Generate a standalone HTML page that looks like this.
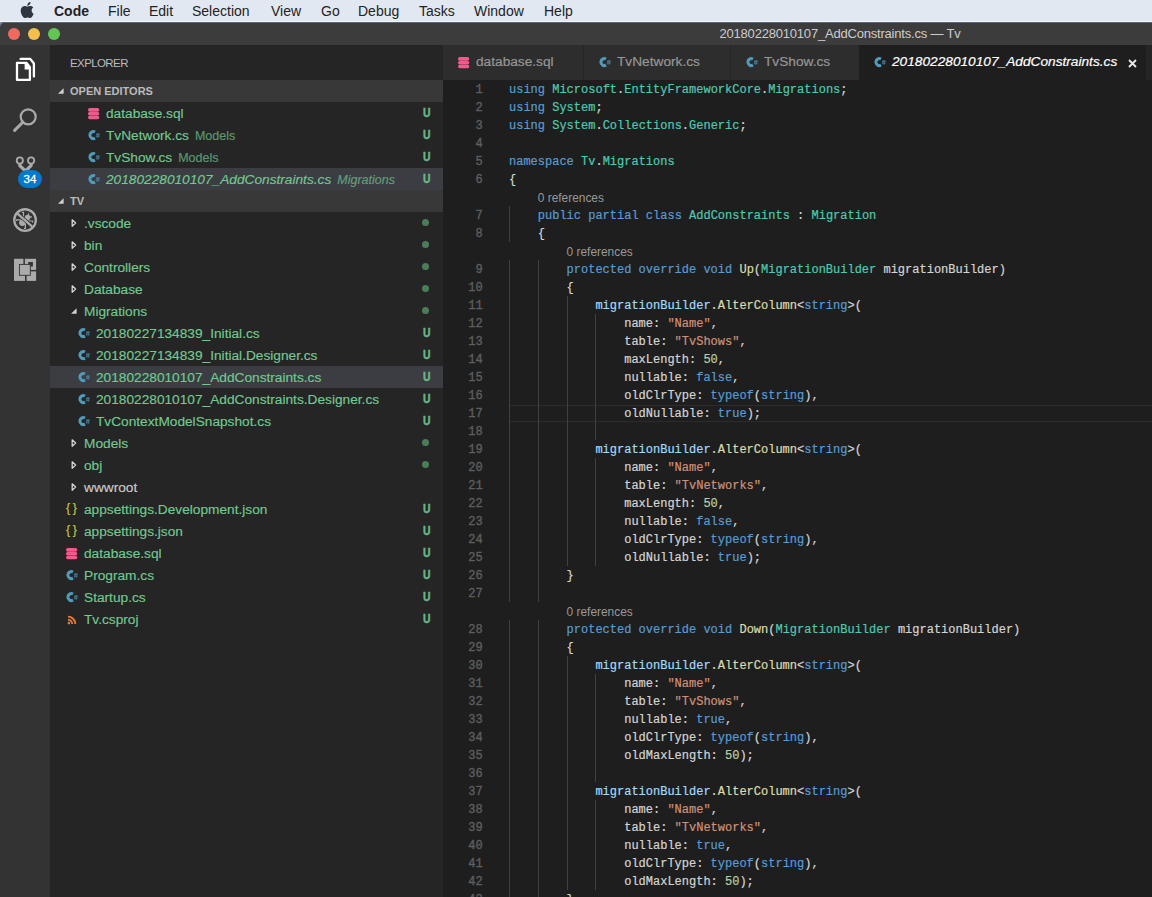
<!DOCTYPE html>
<html><head><meta charset="utf-8">
<style>
*{margin:0;padding:0;box-sizing:border-box}
html,body{width:1152px;height:897px;overflow:hidden;background:#1e1e1e;font-family:"Liberation Sans",sans-serif}
.a{position:absolute;white-space:nowrap}
#menubar{position:absolute;left:0;top:0;width:1152px;height:22px;background:#e2e8f1;color:#222;font-size:14px}
#menubar span{position:absolute;top:3px}
#titlebar{position:absolute;left:0;top:22px;width:1152px;height:23px;background:#3c3c3c;border-radius:5px 0 0 0;box-shadow:inset 0 1px 0 #55657a}
#titlebar .t{position:absolute;left:719.5px;top:4px;color:#cccccc;font-size:13px;letter-spacing:-0.2px}
.dot{position:absolute;top:28px;width:12px;height:12px;border-radius:50%}
#act{position:absolute;left:0;top:45px;width:50px;height:852px;background:#333333}
#side{position:absolute;left:50px;top:45px;width:393px;height:852px;background:#252526;color:#73c991;font-size:13px}
#tabs{position:absolute;left:443px;top:45px;width:709px;height:35px;background:#252526}
.tab{position:absolute;top:0;height:35px;background:#2d2d2d;color:#969696;font-size:13.7px}
.tab .tx{position:absolute;top:9px;-webkit-text-stroke:0.2px currentColor}
#editor{position:absolute;left:443px;top:80px;width:709px;height:817px;background:#1e1e1e;overflow:hidden}
.ln{position:absolute;left:0;margin-top:1px;width:39.7px;text-align:right;color:#5e5e5e;-webkit-text-stroke:0.35px #5e5e5e;font-family:"Liberation Mono",monospace;font-size:12px;line-height:18px;height:18px}
.cl{position:absolute;margin-top:1px;-webkit-text-stroke:0.2px;color:#d4d4d4;font-family:"Liberation Mono",monospace;font-size:12px;line-height:18px;height:18px;white-space:pre}
.lens{position:absolute;color:#999999;font-size:11.9px;line-height:18px;height:18px;margin-top:1px;white-space:pre}
.row{position:absolute;left:0;width:393px;height:22px}
.row .tx{position:absolute;top:4px}
.row .u{position:absolute;left:372px;top:4px;font-size:12px}
.row .d{position:absolute;left:373px;top:8px;width:7px;height:7px;border-radius:50%;background:#4f7a5e}
.g{position:absolute;width:1px;height:18px;background:#404040}
.hdr{position:absolute;left:0;width:393px;height:22px;background:#383838;color:#bbbbbb;font-size:11px;font-weight:bold}
</style></head><body>
<div id="menubar">
  <svg class="a" style="left:20px;top:2px" width="14" height="16" viewBox="0 0 14 16"><path d="M11.6 8.5c0-2 1.6-2.9 1.7-3-0.9-1.4-2.4-1.5-2.9-1.6-1.2-0.1-2.4 0.7-3 0.7s-1.6-0.7-2.6-0.7C3.4 4 2.1 4.7 1.4 6c-1.4 2.5-0.4 6.1 1 8.1 0.7 1 1.5 2 2.5 2 1 0 1.4-0.7 2.6-0.7s1.6 0.7 2.6 0.6c1.1 0 1.8-1 2.4-2 0.8-1.1 1.1-2.2 1.1-2.3-0.1 0-2-0.8-2-3.2zM9.7 2.6c0.5-0.7 0.9-1.6 0.8-2.6-0.8 0-1.8 0.5-2.4 1.200-0.5 0.6-1 1.5-0.8 2.500 0.9 0.1 1.8-0.400 2.400-1.100z" fill="#303641"/></svg>
  <span style="left:54px;font-weight:bold">Code</span>
  <span style="left:108px">File</span>
  <span style="left:149px">Edit</span>
  <span style="left:192px">Selection</span>
  <span style="left:271px">View</span>
  <span style="left:321px">Go</span>
  <span style="left:358px">Debug</span>
  <span style="left:419px">Tasks</span>
  <span style="left:474px">Window</span>
  <span style="left:544px">Help</span>
</div>
<div style="position:absolute;left:0;top:21px;width:1152px;height:10px;background:#7e92aa"></div>
<div style="position:absolute;left:0;top:21px;width:1152px;height:1px;background:#f3f6fa"></div>
<div id="titlebar"><div class="t">20180228010107_AddConstraints.cs — Tv</div></div>
<div class="dot" style="left:8px;background:#ee6a5e"></div>
<div class="dot" style="left:28px;background:#f5bf4f"></div>
<div class="dot" style="left:48px;background:#62c655"></div>

<div id="act">

<svg class="a" style="left:14px;top:11px" width="24" height="28" viewBox="0 0 24 28"><g fill="none" stroke="#ffffff" stroke-width="2.3" stroke-linejoin="round" stroke-linecap="round"><path d="M3 6.85H12.6L15.9 11.2V23.95H3Z"/><path d="M6.6 2.9H16.3L19.9 7.5V20.6"/></g><path d="M10.6 6.85H12.6L15.9 11.2V13.4H10.6Z" fill="#ffffff"/></svg>
<svg class="a" style="left:12px;top:62px" width="26" height="26" viewBox="0 0 26 26"><g fill="none" stroke="#a9a9a9" stroke-width="2.2"><circle cx="16.2" cy="9.8" r="7.5"/><path d="M10.8 15.2L2.6 23.4" stroke-width="3" stroke-linecap="round"/></g></svg>
<svg class="a" style="left:10px;top:105px" width="30" height="30" viewBox="0 0 30 30"><g fill="none" stroke="#ababab"><circle cx="9.8" cy="10.5" r="3.1" stroke-width="1.8"/><circle cx="21.1" cy="10.5" r="3.1" stroke-width="1.8"/><path d="M9.8 13.4V15.6L15.45 21M21.1 13.4V15.6L15.45 21" stroke-width="3.2" stroke-linejoin="round"/></g></svg>
<div class="a" style="left:18px;top:125px;width:24px;height:18px;border-radius:9px;background:#007acc;color:#fff;font-size:11.5px;-webkit-text-stroke:0.3px #fff;text-align:center;line-height:18px">34</div>
<svg class="a" style="left:11px;top:161px" width="28" height="28" viewBox="0 0 28 28"><g fill="#ababab"><ellipse cx="11.4" cy="16.8" rx="3.3" ry="3.1"/><ellipse cx="16.6" cy="11.4" rx="2.8" ry="2.6"/></g><g fill="none" stroke="#ababab" stroke-width="1.2"><path d="M5.6 15V13.8H10.5M12.5 10.5V6.4H11M17.5 10V7.2M18.4 10.8H21M17 15H21.6V16.6M14.4 17.5V22.4H13"/></g><path d="M6.2 7.4L21.2 20.6" stroke="#333333" stroke-width="3.6"/><path d="M6.2 7.4L21.2 20.6" stroke="#ababab" stroke-width="2.2"/><circle cx="14.05" cy="14.05" r="10.8" fill="none" stroke="#ababab" stroke-width="2.3"/></svg>
<svg class="a" style="left:13px;top:213px" width="24" height="24" viewBox="0 0 24 24"><path d="M1 0.8h22.1v22.1H1z" fill="#ababab"/><g fill="#333333"><rect x="10.4" y="0" width="1.5" height="7"/><rect x="12" y="17" width="1.6" height="7"/><rect x="17" y="11.9" width="7" height="1.5"/><rect x="15.2" y="4" width="4.7" height="4.5"/></g><rect x="6.4" y="6.4" width="10.9" height="10.9" fill="#ababab" stroke="#333333" stroke-width="0.9"/></svg>

</div>

<div id="side">
<div class="a" style="left:20px;top:12px;color:#bbbbbb;font-size:11.5px;letter-spacing:-0.6px">EXPLORER</div>
<div class="hdr" style="top:35px"></div>
<svg class="a" style="left:7px;top:42px" width="8" height="8" viewBox="0 0 8 8"><path d="M6.6 1.2L6.6 6.8L1 6.8Z" fill="#d0d0d0"/></svg>
<div class="a" style="left:20px;top:40px;color:#bbbbbb;font-size:11px;font-weight:bold">OPEN EDITORS</div>
<svg class="a" style="left:38px;top:63px" width="12" height="12" viewBox="0 0 12 12"><g fill="#f05b8b"><rect x="0" y="0" width="11.3" height="3.7" rx="1.85"/><rect x="0" y="3.95" width="11.3" height="3.5" rx="1.6"/><rect x="0" y="7.7" width="11.3" height="3.6" rx="1.7"/></g></svg><div class="a" style="left:56px;top:58px;line-height:22px;font-size:13.7px;-webkit-text-stroke:0.15px #73c991;color:#73c991;">database.sql</div><div class="a" style="left:372.8px;top:57px;line-height:22px;color:#68b985;font-size:13px;font-weight:bold;-webkit-text-stroke:0.5px #68b985;transform:scaleX(0.8);transform-origin:0 0">U</div>
<svg class="a" style="left:38px;top:85px" width="12" height="11" viewBox="0 0 12 11"><path d="M7.0 2.0A3.5 3.5 0 1 0 7.0 8.2" fill="none" stroke="#519aba" stroke-width="3"/><g stroke="#519aba" stroke-width="0.75" opacity="0.85"><path d="M9.2 3.0l-0.3 4.6M10.9 3.0l-0.3 4.6M8.0 4.4h3.6M7.8 6.2h3.6"/></g></svg><div class="a" style="left:56px;top:80px;line-height:22px;font-size:13.7px;-webkit-text-stroke:0.15px #73c991;color:#73c991;">TvNetwork.cs<span style="font-size:12.5px;opacity:0.7;margin-left:6px">Models</span></div><div class="a" style="left:372.8px;top:79px;line-height:22px;color:#68b985;font-size:13px;font-weight:bold;-webkit-text-stroke:0.5px #68b985;transform:scaleX(0.8);transform-origin:0 0">U</div>
<svg class="a" style="left:38px;top:107px" width="12" height="11" viewBox="0 0 12 11"><path d="M7.0 2.0A3.5 3.5 0 1 0 7.0 8.2" fill="none" stroke="#519aba" stroke-width="3"/><g stroke="#519aba" stroke-width="0.75" opacity="0.85"><path d="M9.2 3.0l-0.3 4.6M10.9 3.0l-0.3 4.6M8.0 4.4h3.6M7.8 6.2h3.6"/></g></svg><div class="a" style="left:56px;top:102px;line-height:22px;font-size:13.7px;-webkit-text-stroke:0.15px #73c991;color:#73c991;">TvShow.cs<span style="font-size:12.5px;opacity:0.7;margin-left:6px">Models</span></div><div class="a" style="left:372.8px;top:101px;line-height:22px;color:#68b985;font-size:13px;font-weight:bold;-webkit-text-stroke:0.5px #68b985;transform:scaleX(0.8);transform-origin:0 0">U</div>
<div class="row" style="top:123px;background:#3c3c43"></div><svg class="a" style="left:38px;top:129px" width="12" height="11" viewBox="0 0 12 11"><path d="M7.0 2.0A3.5 3.5 0 1 0 7.0 8.2" fill="none" stroke="#519aba" stroke-width="3"/><g stroke="#519aba" stroke-width="0.75" opacity="0.85"><path d="M9.2 3.0l-0.3 4.6M10.9 3.0l-0.3 4.6M8.0 4.4h3.6M7.8 6.2h3.6"/></g></svg><div class="a" style="left:56px;top:124px;line-height:22px;font-size:13.7px;-webkit-text-stroke:0.15px #73c991;color:#73c991;font-style:italic;">20180228010107_AddConstraints.cs<span style="font-size:12.5px;opacity:0.7;margin-left:6px"><i>Migrations</i></span></div><div class="a" style="left:372.8px;top:123px;line-height:22px;color:#68b985;font-size:13px;font-weight:bold;-webkit-text-stroke:0.5px #68b985;transform:scaleX(0.8);transform-origin:0 0">U</div>
<div class="hdr" style="top:145px"></div>
<svg class="a" style="left:7px;top:152px" width="8" height="8" viewBox="0 0 8 8"><path d="M6.6 1.2L6.6 6.8L1 6.8Z" fill="#d0d0d0"/></svg>
<div class="a" style="left:20px;top:150px;color:#bbbbbb;font-size:11px;font-weight:bold">TV</div>
<svg class="a" style="left:21px;top:173px" width="6" height="10" viewBox="0 0 6 10"><path d="M1.2 1.8L4.6 5L1.2 8.2Z" fill="none" stroke="#d4d4d4" stroke-width="1.3" stroke-linejoin="round"/></svg><div class="a" style="left:34px;top:168px;line-height:22px;font-size:13.7px;-webkit-text-stroke:0.15px #73c991;color:#73c991;">.vscode</div><div class="a" style="left:372px;top:174px;width:7px;height:7px;border-radius:50%;background:#4b7d5b"></div>
<svg class="a" style="left:21px;top:195px" width="6" height="10" viewBox="0 0 6 10"><path d="M1.2 1.8L4.6 5L1.2 8.2Z" fill="none" stroke="#d4d4d4" stroke-width="1.3" stroke-linejoin="round"/></svg><div class="a" style="left:34px;top:190px;line-height:22px;font-size:13.7px;-webkit-text-stroke:0.15px #73c991;color:#73c991;">bin</div><div class="a" style="left:372px;top:196px;width:7px;height:7px;border-radius:50%;background:#4b7d5b"></div>
<svg class="a" style="left:21px;top:217px" width="6" height="10" viewBox="0 0 6 10"><path d="M1.2 1.8L4.6 5L1.2 8.2Z" fill="none" stroke="#d4d4d4" stroke-width="1.3" stroke-linejoin="round"/></svg><div class="a" style="left:34px;top:212px;line-height:22px;font-size:13.7px;-webkit-text-stroke:0.15px #73c991;color:#73c991;">Controllers</div><div class="a" style="left:372px;top:218px;width:7px;height:7px;border-radius:50%;background:#4b7d5b"></div>
<svg class="a" style="left:21px;top:239px" width="6" height="10" viewBox="0 0 6 10"><path d="M1.2 1.8L4.6 5L1.2 8.2Z" fill="none" stroke="#d4d4d4" stroke-width="1.3" stroke-linejoin="round"/></svg><div class="a" style="left:34px;top:234px;line-height:22px;font-size:13.7px;-webkit-text-stroke:0.15px #73c991;color:#73c991;">Database</div><div class="a" style="left:372px;top:240px;width:7px;height:7px;border-radius:50%;background:#4b7d5b"></div>
<svg class="a" style="left:20px;top:262px" width="8" height="8" viewBox="0 0 8 8"><path d="M6.6 1.2L6.6 6.8L1 6.8Z" fill="#d0d0d0"/></svg><div class="a" style="left:34px;top:256px;line-height:22px;font-size:13.7px;-webkit-text-stroke:0.15px #73c991;color:#73c991;">Migrations</div><div class="a" style="left:372px;top:262px;width:7px;height:7px;border-radius:50%;background:#4b7d5b"></div>
<svg class="a" style="left:28px;top:283px" width="12" height="11" viewBox="0 0 12 11"><path d="M7.0 2.0A3.5 3.5 0 1 0 7.0 8.2" fill="none" stroke="#519aba" stroke-width="3"/><g stroke="#519aba" stroke-width="0.75" opacity="0.85"><path d="M9.2 3.0l-0.3 4.6M10.9 3.0l-0.3 4.6M8.0 4.4h3.6M7.8 6.2h3.6"/></g></svg><div class="a" style="left:46px;top:278px;line-height:22px;font-size:13.7px;-webkit-text-stroke:0.15px #73c991;color:#73c991;">20180227134839_Initial.cs</div><div class="a" style="left:372.8px;top:277px;line-height:22px;color:#68b985;font-size:13px;font-weight:bold;-webkit-text-stroke:0.5px #68b985;transform:scaleX(0.8);transform-origin:0 0">U</div>
<svg class="a" style="left:28px;top:305px" width="12" height="11" viewBox="0 0 12 11"><path d="M7.0 2.0A3.5 3.5 0 1 0 7.0 8.2" fill="none" stroke="#519aba" stroke-width="3"/><g stroke="#519aba" stroke-width="0.75" opacity="0.85"><path d="M9.2 3.0l-0.3 4.6M10.9 3.0l-0.3 4.6M8.0 4.4h3.6M7.8 6.2h3.6"/></g></svg><div class="a" style="left:46px;top:300px;line-height:22px;font-size:13.7px;-webkit-text-stroke:0.15px #73c991;color:#73c991;">20180227134839_Initial.Designer.cs</div><div class="a" style="left:372.8px;top:299px;line-height:22px;color:#68b985;font-size:13px;font-weight:bold;-webkit-text-stroke:0.5px #68b985;transform:scaleX(0.8);transform-origin:0 0">U</div>
<div class="row" style="top:321px;background:#3c3c43"></div><svg class="a" style="left:28px;top:327px" width="12" height="11" viewBox="0 0 12 11"><path d="M7.0 2.0A3.5 3.5 0 1 0 7.0 8.2" fill="none" stroke="#519aba" stroke-width="3"/><g stroke="#519aba" stroke-width="0.75" opacity="0.85"><path d="M9.2 3.0l-0.3 4.6M10.9 3.0l-0.3 4.6M8.0 4.4h3.6M7.8 6.2h3.6"/></g></svg><div class="a" style="left:46px;top:322px;line-height:22px;font-size:13.7px;-webkit-text-stroke:0.15px #73c991;color:#73c991;">20180228010107_AddConstraints.cs</div><div class="a" style="left:372.8px;top:321px;line-height:22px;color:#68b985;font-size:13px;font-weight:bold;-webkit-text-stroke:0.5px #68b985;transform:scaleX(0.8);transform-origin:0 0">U</div>
<svg class="a" style="left:28px;top:349px" width="12" height="11" viewBox="0 0 12 11"><path d="M7.0 2.0A3.5 3.5 0 1 0 7.0 8.2" fill="none" stroke="#519aba" stroke-width="3"/><g stroke="#519aba" stroke-width="0.75" opacity="0.85"><path d="M9.2 3.0l-0.3 4.6M10.9 3.0l-0.3 4.6M8.0 4.4h3.6M7.8 6.2h3.6"/></g></svg><div class="a" style="left:46px;top:344px;line-height:22px;font-size:13.7px;-webkit-text-stroke:0.15px #73c991;color:#73c991;">20180228010107_AddConstraints.Designer.cs</div><div class="a" style="left:372.8px;top:343px;line-height:22px;color:#68b985;font-size:13px;font-weight:bold;-webkit-text-stroke:0.5px #68b985;transform:scaleX(0.8);transform-origin:0 0">U</div>
<svg class="a" style="left:28px;top:371px" width="12" height="11" viewBox="0 0 12 11"><path d="M7.0 2.0A3.5 3.5 0 1 0 7.0 8.2" fill="none" stroke="#519aba" stroke-width="3"/><g stroke="#519aba" stroke-width="0.75" opacity="0.85"><path d="M9.2 3.0l-0.3 4.6M10.9 3.0l-0.3 4.6M8.0 4.4h3.6M7.8 6.2h3.6"/></g></svg><div class="a" style="left:46px;top:366px;line-height:22px;font-size:13.7px;-webkit-text-stroke:0.15px #73c991;color:#73c991;">TvContextModelSnapshot.cs</div><div class="a" style="left:372.8px;top:365px;line-height:22px;color:#68b985;font-size:13px;font-weight:bold;-webkit-text-stroke:0.5px #68b985;transform:scaleX(0.8);transform-origin:0 0">U</div>
<svg class="a" style="left:21px;top:393px" width="6" height="10" viewBox="0 0 6 10"><path d="M1.2 1.8L4.6 5L1.2 8.2Z" fill="none" stroke="#d4d4d4" stroke-width="1.3" stroke-linejoin="round"/></svg><div class="a" style="left:34px;top:388px;line-height:22px;font-size:13.7px;-webkit-text-stroke:0.15px #73c991;color:#73c991;">Models</div><div class="a" style="left:372px;top:394px;width:7px;height:7px;border-radius:50%;background:#4b7d5b"></div>
<svg class="a" style="left:21px;top:415px" width="6" height="10" viewBox="0 0 6 10"><path d="M1.2 1.8L4.6 5L1.2 8.2Z" fill="none" stroke="#d4d4d4" stroke-width="1.3" stroke-linejoin="round"/></svg><div class="a" style="left:34px;top:410px;line-height:22px;font-size:13.7px;-webkit-text-stroke:0.15px #73c991;color:#73c991;">obj</div><div class="a" style="left:372px;top:416px;width:7px;height:7px;border-radius:50%;background:#4b7d5b"></div>
<svg class="a" style="left:21px;top:437px" width="6" height="10" viewBox="0 0 6 10"><path d="M1.2 1.8L4.6 5L1.2 8.2Z" fill="none" stroke="#d4d4d4" stroke-width="1.3" stroke-linejoin="round"/></svg><div class="a" style="left:34px;top:432px;line-height:22px;font-size:13.7px;-webkit-text-stroke:0.15px #cccccc;color:#cccccc;">wwwroot</div>
<div class="a" style="left:16px;top:456px;color:#cbcb41;font-size:12.5px;letter-spacing:2.5px;-webkit-text-stroke:0.1px #cbcb41">{}</div><div class="a" style="left:34px;top:454px;line-height:22px;font-size:13.7px;-webkit-text-stroke:0.15px #73c991;color:#73c991;">appsettings.Development.json</div><div class="a" style="left:372.8px;top:453px;line-height:22px;color:#68b985;font-size:13px;font-weight:bold;-webkit-text-stroke:0.5px #68b985;transform:scaleX(0.8);transform-origin:0 0">U</div>
<div class="a" style="left:16px;top:478px;color:#cbcb41;font-size:12.5px;letter-spacing:2.5px;-webkit-text-stroke:0.1px #cbcb41">{}</div><div class="a" style="left:34px;top:476px;line-height:22px;font-size:13.7px;-webkit-text-stroke:0.15px #73c991;color:#73c991;">appsettings.json</div><div class="a" style="left:372.8px;top:475px;line-height:22px;color:#68b985;font-size:13px;font-weight:bold;-webkit-text-stroke:0.5px #68b985;transform:scaleX(0.8);transform-origin:0 0">U</div>
<svg class="a" style="left:16px;top:503px" width="12" height="12" viewBox="0 0 12 12"><g fill="#f05b8b"><rect x="0" y="0" width="11.3" height="3.7" rx="1.85"/><rect x="0" y="3.95" width="11.3" height="3.5" rx="1.6"/><rect x="0" y="7.7" width="11.3" height="3.6" rx="1.7"/></g></svg><div class="a" style="left:34px;top:498px;line-height:22px;font-size:13.7px;-webkit-text-stroke:0.15px #73c991;color:#73c991;">database.sql</div><div class="a" style="left:372.8px;top:497px;line-height:22px;color:#68b985;font-size:13px;font-weight:bold;-webkit-text-stroke:0.5px #68b985;transform:scaleX(0.8);transform-origin:0 0">U</div>
<svg class="a" style="left:16px;top:525px" width="12" height="11" viewBox="0 0 12 11"><path d="M7.0 2.0A3.5 3.5 0 1 0 7.0 8.2" fill="none" stroke="#519aba" stroke-width="3"/><g stroke="#519aba" stroke-width="0.75" opacity="0.85"><path d="M9.2 3.0l-0.3 4.6M10.9 3.0l-0.3 4.6M8.0 4.4h3.6M7.8 6.2h3.6"/></g></svg><div class="a" style="left:34px;top:520px;line-height:22px;font-size:13.7px;-webkit-text-stroke:0.15px #73c991;color:#73c991;">Program.cs</div><div class="a" style="left:372.8px;top:519px;line-height:22px;color:#68b985;font-size:13px;font-weight:bold;-webkit-text-stroke:0.5px #68b985;transform:scaleX(0.8);transform-origin:0 0">U</div>
<svg class="a" style="left:16px;top:547px" width="12" height="11" viewBox="0 0 12 11"><path d="M7.0 2.0A3.5 3.5 0 1 0 7.0 8.2" fill="none" stroke="#519aba" stroke-width="3"/><g stroke="#519aba" stroke-width="0.75" opacity="0.85"><path d="M9.2 3.0l-0.3 4.6M10.9 3.0l-0.3 4.6M8.0 4.4h3.6M7.8 6.2h3.6"/></g></svg><div class="a" style="left:34px;top:542px;line-height:22px;font-size:13.7px;-webkit-text-stroke:0.15px #73c991;color:#73c991;">Startup.cs</div><div class="a" style="left:372.8px;top:541px;line-height:22px;color:#68b985;font-size:13px;font-weight:bold;-webkit-text-stroke:0.5px #68b985;transform:scaleX(0.8);transform-origin:0 0">U</div>
<svg class="a" style="left:17px;top:570px" width="10" height="10" viewBox="0 0 10 10"><g fill="none" stroke="#e37933" stroke-width="1.9"><path d="M1 1.6a7.3 7.3 0 0 1 7.3 7.3"/><path d="M1 4.8a4.2 4.2 0 0 1 4.2 4.2"/></g><circle cx="1.9" cy="8.1" r="1.3" fill="#e37933"/></svg><div class="a" style="left:34px;top:564px;line-height:22px;font-size:13.7px;-webkit-text-stroke:0.15px #73c991;color:#73c991;">Tv.csproj</div><div class="a" style="left:372.8px;top:563px;line-height:22px;color:#68b985;font-size:13px;font-weight:bold;-webkit-text-stroke:0.5px #68b985;transform:scaleX(0.8);transform-origin:0 0">U</div>
</div>

<div id="tabs">
<div class="tab" style="left:0;width:140px"><svg class="a" style="left:15px;top:12px" width="12" height="12" viewBox="0 0 12 12"><g fill="#f05b8b"><rect x="0" y="0" width="11.3" height="3.7" rx="1.85"/><rect x="0" y="3.95" width="11.3" height="3.5" rx="1.6"/><rect x="0" y="7.7" width="11.3" height="3.6" rx="1.7"/></g></svg><div class="tx" style="left:33px">database.sql</div></div>
<div class="tab" style="left:141px;width:146px"><svg class="a" style="left:15px;top:12px" width="12" height="11" viewBox="0 0 12 11"><path d="M7.0 2.0A3.5 3.5 0 1 0 7.0 8.2" fill="none" stroke="#519aba" stroke-width="3"/><g stroke="#519aba" stroke-width="0.75" opacity="0.85"><path d="M9.2 3.0l-0.3 4.6M10.9 3.0l-0.3 4.6M8.0 4.4h3.6M7.8 6.2h3.6"/></g></svg><div class="tx" style="left:33px">TvNetwork.cs</div></div>
<div class="tab" style="left:288px;width:128px"><svg class="a" style="left:15px;top:12px" width="12" height="11" viewBox="0 0 12 11"><path d="M7.0 2.0A3.5 3.5 0 1 0 7.0 8.2" fill="none" stroke="#519aba" stroke-width="3"/><g stroke="#519aba" stroke-width="0.75" opacity="0.85"><path d="M9.2 3.0l-0.3 4.6M10.9 3.0l-0.3 4.6M8.0 4.4h3.6M7.8 6.2h3.6"/></g></svg><div class="tx" style="left:33px">TvShow.cs</div></div>
<div class="tab" style="left:416px;width:287px;background:#1e1e1e;color:#ffffff"><svg class="a" style="left:15px;top:12px" width="12" height="11" viewBox="0 0 12 11"><path d="M7.0 2.0A3.5 3.5 0 1 0 7.0 8.2" fill="none" stroke="#519aba" stroke-width="3"/><g stroke="#519aba" stroke-width="0.75" opacity="0.85"><path d="M9.2 3.0l-0.3 4.6M10.9 3.0l-0.3 4.6M8.0 4.4h3.6M7.8 6.2h3.6"/></g></svg><div class="tx" style="left:33px;font-style:italic">20180228010107_AddConstraints.cs</div><svg class="a" style="left:269px;top:14px" width="9" height="9" viewBox="0 0 9 9"><path d="M1 1L8 8M8 1L1 8" stroke="#e8e8e8" stroke-width="1.8"/></svg></div>
</div>

<div id="editor">
<div style="position:absolute;left:66px;top:325px;width:700px;height:17px;border-top:1px solid #2c2c2c;border-bottom:1px solid #2c2c2c"></div>
<div class="g" style="top:126px;left:66.0px"></div>
<div class="g" style="top:144px;left:66.0px"></div>
<div class="g" style="top:180px;left:66.0px"></div>
<div class="g" style="top:180px;left:94.8px"></div>
<div class="g" style="top:198px;left:66.0px"></div>
<div class="g" style="top:198px;left:94.8px"></div>
<div class="g" style="top:216px;left:66.0px"></div>
<div class="g" style="top:216px;left:94.8px"></div>
<div class="g" style="top:216px;left:123.6px"></div>
<div class="g" style="top:234px;left:66.0px"></div>
<div class="g" style="top:234px;left:94.8px"></div>
<div class="g" style="top:234px;left:123.6px"></div>
<div class="g" style="top:234px;left:152.4px"></div>
<div class="g" style="top:252px;left:66.0px"></div>
<div class="g" style="top:252px;left:94.8px"></div>
<div class="g" style="top:252px;left:123.6px"></div>
<div class="g" style="top:252px;left:152.4px"></div>
<div class="g" style="top:270px;left:66.0px"></div>
<div class="g" style="top:270px;left:94.8px"></div>
<div class="g" style="top:270px;left:123.6px"></div>
<div class="g" style="top:270px;left:152.4px"></div>
<div class="g" style="top:288px;left:66.0px"></div>
<div class="g" style="top:288px;left:94.8px"></div>
<div class="g" style="top:288px;left:123.6px"></div>
<div class="g" style="top:288px;left:152.4px"></div>
<div class="g" style="top:306px;left:66.0px"></div>
<div class="g" style="top:306px;left:94.8px"></div>
<div class="g" style="top:306px;left:123.6px"></div>
<div class="g" style="top:306px;left:152.4px"></div>
<div class="g" style="top:324px;left:66.0px"></div>
<div class="g" style="top:324px;left:94.8px"></div>
<div class="g" style="top:324px;left:123.6px"></div>
<div class="g" style="top:324px;left:152.4px"></div>
<div class="g" style="top:342px;left:66.0px"></div>
<div class="g" style="top:342px;left:94.8px"></div>
<div class="g" style="top:342px;left:123.6px"></div>
<div class="g" style="top:342px;left:152.4px"></div>
<div class="g" style="top:360px;left:66.0px"></div>
<div class="g" style="top:360px;left:94.8px"></div>
<div class="g" style="top:360px;left:123.6px"></div>
<div class="g" style="top:378px;left:66.0px"></div>
<div class="g" style="top:378px;left:94.8px"></div>
<div class="g" style="top:378px;left:123.6px"></div>
<div class="g" style="top:378px;left:152.4px"></div>
<div class="g" style="top:396px;left:66.0px"></div>
<div class="g" style="top:396px;left:94.8px"></div>
<div class="g" style="top:396px;left:123.6px"></div>
<div class="g" style="top:396px;left:152.4px"></div>
<div class="g" style="top:414px;left:66.0px"></div>
<div class="g" style="top:414px;left:94.8px"></div>
<div class="g" style="top:414px;left:123.6px"></div>
<div class="g" style="top:414px;left:152.4px"></div>
<div class="g" style="top:432px;left:66.0px"></div>
<div class="g" style="top:432px;left:94.8px"></div>
<div class="g" style="top:432px;left:123.6px"></div>
<div class="g" style="top:432px;left:152.4px"></div>
<div class="g" style="top:450px;left:66.0px"></div>
<div class="g" style="top:450px;left:94.8px"></div>
<div class="g" style="top:450px;left:123.6px"></div>
<div class="g" style="top:450px;left:152.4px"></div>
<div class="g" style="top:468px;left:66.0px"></div>
<div class="g" style="top:468px;left:94.8px"></div>
<div class="g" style="top:468px;left:123.6px"></div>
<div class="g" style="top:468px;left:152.4px"></div>
<div class="g" style="top:486px;left:66.0px"></div>
<div class="g" style="top:486px;left:94.8px"></div>
<div class="g" style="top:504px;left:66.0px"></div>
<div class="g" style="top:504px;left:94.8px"></div>
<div class="g" style="top:540px;left:66.0px"></div>
<div class="g" style="top:540px;left:94.8px"></div>
<div class="g" style="top:558px;left:66.0px"></div>
<div class="g" style="top:558px;left:94.8px"></div>
<div class="g" style="top:576px;left:66.0px"></div>
<div class="g" style="top:576px;left:94.8px"></div>
<div class="g" style="top:576px;left:123.6px"></div>
<div class="g" style="top:594px;left:66.0px"></div>
<div class="g" style="top:594px;left:94.8px"></div>
<div class="g" style="top:594px;left:123.6px"></div>
<div class="g" style="top:594px;left:152.4px"></div>
<div class="g" style="top:612px;left:66.0px"></div>
<div class="g" style="top:612px;left:94.8px"></div>
<div class="g" style="top:612px;left:123.6px"></div>
<div class="g" style="top:612px;left:152.4px"></div>
<div class="g" style="top:630px;left:66.0px"></div>
<div class="g" style="top:630px;left:94.8px"></div>
<div class="g" style="top:630px;left:123.6px"></div>
<div class="g" style="top:630px;left:152.4px"></div>
<div class="g" style="top:648px;left:66.0px"></div>
<div class="g" style="top:648px;left:94.8px"></div>
<div class="g" style="top:648px;left:123.6px"></div>
<div class="g" style="top:648px;left:152.4px"></div>
<div class="g" style="top:666px;left:66.0px"></div>
<div class="g" style="top:666px;left:94.8px"></div>
<div class="g" style="top:666px;left:123.6px"></div>
<div class="g" style="top:666px;left:152.4px"></div>
<div class="g" style="top:684px;left:66.0px"></div>
<div class="g" style="top:684px;left:94.8px"></div>
<div class="g" style="top:684px;left:123.6px"></div>
<div class="g" style="top:684px;left:152.4px"></div>
<div class="g" style="top:702px;left:66.0px"></div>
<div class="g" style="top:702px;left:94.8px"></div>
<div class="g" style="top:702px;left:123.6px"></div>
<div class="g" style="top:720px;left:66.0px"></div>
<div class="g" style="top:720px;left:94.8px"></div>
<div class="g" style="top:720px;left:123.6px"></div>
<div class="g" style="top:720px;left:152.4px"></div>
<div class="g" style="top:738px;left:66.0px"></div>
<div class="g" style="top:738px;left:94.8px"></div>
<div class="g" style="top:738px;left:123.6px"></div>
<div class="g" style="top:738px;left:152.4px"></div>
<div class="g" style="top:756px;left:66.0px"></div>
<div class="g" style="top:756px;left:94.8px"></div>
<div class="g" style="top:756px;left:123.6px"></div>
<div class="g" style="top:756px;left:152.4px"></div>
<div class="g" style="top:774px;left:66.0px"></div>
<div class="g" style="top:774px;left:94.8px"></div>
<div class="g" style="top:774px;left:123.6px"></div>
<div class="g" style="top:774px;left:152.4px"></div>
<div class="g" style="top:792px;left:66.0px"></div>
<div class="g" style="top:792px;left:94.8px"></div>
<div class="g" style="top:792px;left:123.6px"></div>
<div class="g" style="top:792px;left:152.4px"></div>
<div class="g" style="top:810px;left:66.0px"></div>
<div class="g" style="top:810px;left:94.8px"></div>
<div class="g" style="top:828px;left:66.0px"></div>
<div class="ln" style="top:0px">1</div><div class="cl" style="top:0px;left:66.0px"><span style="color:#569cd6">using</span> <span style="color:#4ec9b0">Microsoft</span>.<span style="color:#4ec9b0">EntityFrameworkCore</span>.<span style="color:#4ec9b0">Migrations</span>;</div>
<div class="ln" style="top:18px">2</div><div class="cl" style="top:18px;left:66.0px"><span style="color:#569cd6">using</span> <span style="color:#4ec9b0">System</span>;</div>
<div class="ln" style="top:36px">3</div><div class="cl" style="top:36px;left:66.0px"><span style="color:#569cd6">using</span> <span style="color:#4ec9b0">System</span>.<span style="color:#4ec9b0">Collections</span>.<span style="color:#4ec9b0">Generic</span>;</div>
<div class="ln" style="top:54px">4</div><div class="cl" style="top:54px;left:66.0px"></div>
<div class="ln" style="top:72px">5</div><div class="cl" style="top:72px;left:66.0px"><span style="color:#569cd6">namespace</span> <span style="color:#4ec9b0">Tv</span>.<span style="color:#4ec9b0">Migrations</span></div>
<div class="ln" style="top:90px">6</div><div class="cl" style="top:90px;left:66.0px">{</div>
<div class="lens" style="top:108px;left:94.8px">0 references</div>
<div class="ln" style="top:126px">7</div><div class="cl" style="top:126px;left:94.8px"><span style="color:#569cd6">public</span> <span style="color:#569cd6">partial</span> <span style="color:#569cd6">class</span> <span style="color:#4ec9b0">AddConstraints</span> : <span style="color:#4ec9b0">Migration</span></div>
<div class="ln" style="top:144px">8</div><div class="cl" style="top:144px;left:94.8px">{</div>
<div class="lens" style="top:162px;left:123.6px">0 references</div>
<div class="ln" style="top:180px">9</div><div class="cl" style="top:180px;left:123.6px"><span style="color:#569cd6">protected</span> <span style="color:#569cd6">override</span> <span style="color:#569cd6">void</span> <span style="color:#dcdcaa">Up</span>(<span style="color:#4ec9b0">MigrationBuilder</span> <span style="color:#d4d4d4">migrationBuilder</span>)</div>
<div class="ln" style="top:198px">10</div><div class="cl" style="top:198px;left:123.6px">{</div>
<div class="ln" style="top:216px">11</div><div class="cl" style="top:216px;left:152.4px"><span style="color:#9cdcfe">migrationBuilder</span>.<span style="color:#dcdcaa">AlterColumn</span>&lt;<span style="color:#569cd6">string</span>&gt;(</div>
<div class="ln" style="top:234px">12</div><div class="cl" style="top:234px;left:181.2px"><span style="color:#d4d4d4">name</span>: <span style="color:#ce9178">&quot;Name&quot;</span>,</div>
<div class="ln" style="top:252px">13</div><div class="cl" style="top:252px;left:181.2px"><span style="color:#d4d4d4">table</span>: <span style="color:#ce9178">&quot;TvShows&quot;</span>,</div>
<div class="ln" style="top:270px">14</div><div class="cl" style="top:270px;left:181.2px"><span style="color:#d4d4d4">maxLength</span>: <span style="color:#b5cea8">50</span>,</div>
<div class="ln" style="top:288px">15</div><div class="cl" style="top:288px;left:181.2px"><span style="color:#d4d4d4">nullable</span>: <span style="color:#569cd6">false</span>,</div>
<div class="ln" style="top:306px">16</div><div class="cl" style="top:306px;left:181.2px"><span style="color:#d4d4d4">oldClrType</span>: <span style="color:#569cd6">typeof</span>(<span style="color:#569cd6">string</span>),</div>
<div class="ln" style="top:324px">17</div><div class="cl" style="top:324px;left:181.2px"><span style="color:#d4d4d4">oldNullable</span>: <span style="color:#569cd6">true</span>);</div>
<div class="ln" style="top:342px">18</div><div class="cl" style="top:342px;left:181.2px"></div>
<div class="ln" style="top:360px">19</div><div class="cl" style="top:360px;left:152.4px"><span style="color:#9cdcfe">migrationBuilder</span>.<span style="color:#dcdcaa">AlterColumn</span>&lt;<span style="color:#569cd6">string</span>&gt;(</div>
<div class="ln" style="top:378px">20</div><div class="cl" style="top:378px;left:181.2px"><span style="color:#d4d4d4">name</span>: <span style="color:#ce9178">&quot;Name&quot;</span>,</div>
<div class="ln" style="top:396px">21</div><div class="cl" style="top:396px;left:181.2px"><span style="color:#d4d4d4">table</span>: <span style="color:#ce9178">&quot;TvNetworks&quot;</span>,</div>
<div class="ln" style="top:414px">22</div><div class="cl" style="top:414px;left:181.2px"><span style="color:#d4d4d4">maxLength</span>: <span style="color:#b5cea8">50</span>,</div>
<div class="ln" style="top:432px">23</div><div class="cl" style="top:432px;left:181.2px"><span style="color:#d4d4d4">nullable</span>: <span style="color:#569cd6">false</span>,</div>
<div class="ln" style="top:450px">24</div><div class="cl" style="top:450px;left:181.2px"><span style="color:#d4d4d4">oldClrType</span>: <span style="color:#569cd6">typeof</span>(<span style="color:#569cd6">string</span>),</div>
<div class="ln" style="top:468px">25</div><div class="cl" style="top:468px;left:181.2px"><span style="color:#d4d4d4">oldNullable</span>: <span style="color:#569cd6">true</span>);</div>
<div class="ln" style="top:486px">26</div><div class="cl" style="top:486px;left:123.6px">}</div>
<div class="ln" style="top:504px">27</div><div class="cl" style="top:504px;left:123.6px"></div>
<div class="lens" style="top:522px;left:123.6px">0 references</div>
<div class="ln" style="top:540px">28</div><div class="cl" style="top:540px;left:123.6px"><span style="color:#569cd6">protected</span> <span style="color:#569cd6">override</span> <span style="color:#569cd6">void</span> <span style="color:#dcdcaa">Down</span>(<span style="color:#4ec9b0">MigrationBuilder</span> <span style="color:#d4d4d4">migrationBuilder</span>)</div>
<div class="ln" style="top:558px">29</div><div class="cl" style="top:558px;left:123.6px">{</div>
<div class="ln" style="top:576px">30</div><div class="cl" style="top:576px;left:152.4px"><span style="color:#9cdcfe">migrationBuilder</span>.<span style="color:#dcdcaa">AlterColumn</span>&lt;<span style="color:#569cd6">string</span>&gt;(</div>
<div class="ln" style="top:594px">31</div><div class="cl" style="top:594px;left:181.2px"><span style="color:#d4d4d4">name</span>: <span style="color:#ce9178">&quot;Name&quot;</span>,</div>
<div class="ln" style="top:612px">32</div><div class="cl" style="top:612px;left:181.2px"><span style="color:#d4d4d4">table</span>: <span style="color:#ce9178">&quot;TvShows&quot;</span>,</div>
<div class="ln" style="top:630px">33</div><div class="cl" style="top:630px;left:181.2px"><span style="color:#d4d4d4">nullable</span>: <span style="color:#569cd6">true</span>,</div>
<div class="ln" style="top:648px">34</div><div class="cl" style="top:648px;left:181.2px"><span style="color:#d4d4d4">oldClrType</span>: <span style="color:#569cd6">typeof</span>(<span style="color:#569cd6">string</span>),</div>
<div class="ln" style="top:666px">35</div><div class="cl" style="top:666px;left:181.2px"><span style="color:#d4d4d4">oldMaxLength</span>: <span style="color:#b5cea8">50</span>);</div>
<div class="ln" style="top:684px">36</div><div class="cl" style="top:684px;left:181.2px"></div>
<div class="ln" style="top:702px">37</div><div class="cl" style="top:702px;left:152.4px"><span style="color:#9cdcfe">migrationBuilder</span>.<span style="color:#dcdcaa">AlterColumn</span>&lt;<span style="color:#569cd6">string</span>&gt;(</div>
<div class="ln" style="top:720px">38</div><div class="cl" style="top:720px;left:181.2px"><span style="color:#d4d4d4">name</span>: <span style="color:#ce9178">&quot;Name&quot;</span>,</div>
<div class="ln" style="top:738px">39</div><div class="cl" style="top:738px;left:181.2px"><span style="color:#d4d4d4">table</span>: <span style="color:#ce9178">&quot;TvNetworks&quot;</span>,</div>
<div class="ln" style="top:756px">40</div><div class="cl" style="top:756px;left:181.2px"><span style="color:#d4d4d4">nullable</span>: <span style="color:#569cd6">true</span>,</div>
<div class="ln" style="top:774px">41</div><div class="cl" style="top:774px;left:181.2px"><span style="color:#d4d4d4">oldClrType</span>: <span style="color:#569cd6">typeof</span>(<span style="color:#569cd6">string</span>),</div>
<div class="ln" style="top:792px">42</div><div class="cl" style="top:792px;left:181.2px"><span style="color:#d4d4d4">oldMaxLength</span>: <span style="color:#b5cea8">50</span>);</div>
<div class="ln" style="top:810px">43</div><div class="cl" style="top:810px;left:123.6px">}</div>
<div class="ln" style="top:828px">44</div><div class="cl" style="top:828px;left:94.8px">}</div>
</div>
</body></html>
